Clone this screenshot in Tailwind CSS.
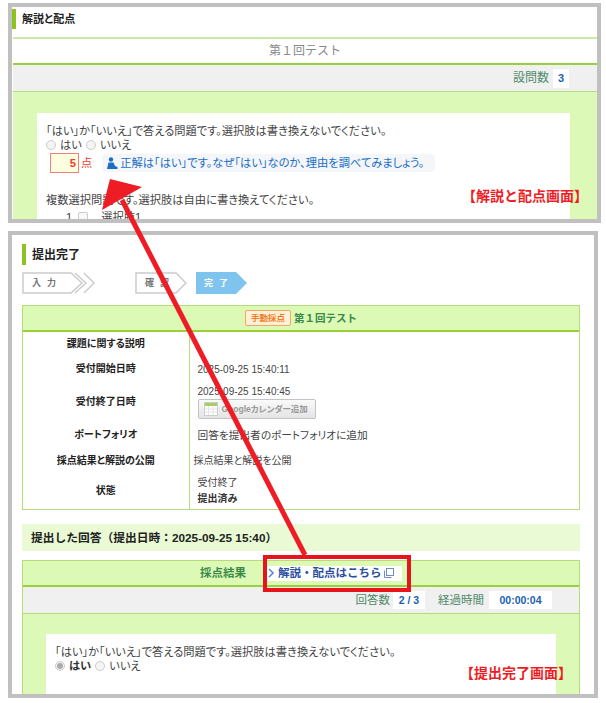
<!DOCTYPE html>
<html lang="ja">
<head>
  <meta charset="UTF-8" />
  <title>解説と配点 / 提出完了</title>
  <script src="https://cdn.jsdelivr.net/npm/@tailwindcss/browser@4"></script>
</head>
<body class="bg-white">
  <div class="relative w-[606px] h-[703px] overflow-hidden bg-white text-[#444] text-[11.25px] leading-[14px] whitespace-nowrap [font-feature-settings:'palt'] font-['Liberation_Sans','Noto_Sans_CJK_JP',sans-serif]">

    <!-- 解説と配点画面 -->
    <section class="ml-[8px] mt-[3px] w-[593px] h-[220px] border-4 border-[#c0c0c0] overflow-hidden bg-white">
      <div class="flex items-center h-[20px] mt-[2px] border-l-4 border-[#8cc31e] pl-[6px] text-[11px] font-bold text-[#222]">解説と配点</div>
      <div class="mt-[8px] ml-px border-t-2 border-[#cfe8a0] h-[28px] border-b-2 border-b-[#9ad03c] flex items-center justify-center text-[12px] text-[#888] [font-feature-settings:normal]">第１回テスト</div>
      <div class="ml-px h-[27px] bg-[#f0f0f0] border-b border-[#b5dc78] flex items-center justify-end pr-[28px]">
        <span class="text-[12px] text-[#4f8a6a]">設問数</span>
        <span class="ml-[4px] w-[16px] h-[19px] bg-white flex items-center justify-center text-[11px] font-bold text-[#1a5fb4]">3</span>
      </div>
      <div class="ml-px h-[140px] bg-[#ddf9b8] pl-[24px] pr-[27px] pt-[21px]">
        <div class="h-[120px] bg-white pl-[9px] pt-[11px]">
          <p>「はい」か「いいえ」で答える問題です。選択肢は書き換えないでください。</p>
          <div class="flex items-center h-[14px]">
            <span class="w-[10px] h-[10px] rounded-full border border-[#ccc] bg-[#f4f4f4]"></span>
            <span class="ml-[4px]">はい</span>
            <span class="ml-[4px] w-[10px] h-[10px] rounded-full border border-[#ccc] bg-[#f4f4f4]"></span>
            <span class="ml-[4px]">いいえ</span>
          </div>
          <div class="flex items-center mt-[1px] ml-[4px]">
            <span class="w-[29px] h-[20px] border border-[#f08078] bg-[#ffffe0] flex items-center justify-end pr-[2px] text-[#f03a2e] font-bold">5</span>
            <span class="ml-[2px] text-[#f03a2e]">点</span>
            <div class="ml-[10px] w-[333px] h-[18px] rounded-[4px] bg-[#f4f6fa] flex items-center pl-[4px] text-[#1a6fc4]">
              <svg width="12" height="13" viewBox="0 0 12 13" class="shrink-0"><circle cx="5" cy="2.500" r="2.200" fill="#1a6fc4"/><path d="M1 12l1.500-6.500h5L9 9l2.500 1v2z" fill="#1a6fc4"/></svg>
              <span class="ml-[2px]">正解は「はい」です。なぜ「はい」なのか、理由を調べてみましょう。</span>
            </div>
          </div>
          <p class="mt-[20px]">複数選択問題です。選択肢は自由に書き換えてください。</p>
          <div class="flex items-center mt-[3px] ml-[20px]">
            <span>1</span>
            <span class="ml-[6px] w-[10px] h-[10px] rounded-[2px] border border-[#ccc] bg-[#f8f8f8]"></span>
            <span class="ml-[13px]">選択肢1</span>
          </div>
        </div>
      </div>
    </section>

    <!-- 提出完了画面 -->
    <section class="ml-[8px] mt-[8px] w-[590px] h-[467px] border-4 border-[#c0c0c0] overflow-hidden bg-white pl-[10px] pr-[14px] pt-[9px]">
      <div class="flex items-center h-[21px] border-l-4 border-[#8cc31e] pl-[6px] text-[12px] font-bold text-[#222]">提出完了</div>

      <div class="flex mt-[7px] h-[22px] text-[9px] font-bold">
        <div class="relative w-[73px] h-[22px]">
          <svg width="73" height="22" class="absolute inset-0" fill="none" stroke="#ccc" stroke-width="1.500"><path d="M1 1h48l11 10-11 10H1z"/><path d="M53 1l11 10-11 10M62 1l10 10-10 10"/></svg>
          <span class="absolute left-[10px] top-[4px] text-[#777] tracking-[6px]">入力</span>
        </div>
        <div class="relative ml-[40px] w-[52px] h-[22px]">
          <svg width="52" height="22" class="absolute inset-0" fill="none" stroke="#ccc" stroke-width="1.500"><path d="M1 1h40l10 10-10 10H1z"/></svg>
          <span class="absolute left-[10px] top-[4px] text-[#777] tracking-[6px]">確認</span>
        </div>
        <div class="relative ml-[9px] w-[51px] h-[22px]">
          <svg width="51" height="22" class="absolute inset-0"><path d="M0 0h40l11 11-11 11H0z" fill="#7fc4ef"/></svg>
          <span class="absolute left-[8px] top-[4px] text-white tracking-[6px]">完了</span>
        </div>
      </div>

      <div class="mt-[11px] border border-[#b5dc78] text-[10px]">
        <div class="h-[26px] bg-[#dcf9b6] border-b-2 border-[#9ad03c] flex items-center justify-center">
          <span class="w-[46px] h-[16px] border border-[#f4a860] rounded-[2px] bg-[#fff1d8] flex items-center justify-center text-[8.5px] font-bold text-[#f07a1e]">手動採点</span>
          <span class="ml-[3px] text-[10.5px] font-bold text-[#3b8a4a] [font-feature-settings:normal]">第１回テスト</span>
        </div>
        <table class="w-full">
          <tbody>
            <tr class="h-[24px]">
              <th class="w-[166px] border-r border-[#b5dc78] text-[#222]">課題に関する説明</th>
              <td></td>
            </tr>
            <tr class="h-[26px]">
              <th class="border-r border-[#b5dc78] text-[#222]">受付開始日時</th>
              <td class="pl-[8px] pt-[2px]">2025-09-25 15:40:11</td>
            </tr>
            <tr class="h-[40px]">
              <th class="border-r border-[#b5dc78] text-[#222]">受付終了日時</th>
              <td class="pl-[8px]">
                <div>2025-09-25 15:40:45</div>
                <div class="flex items-center w-[118px] h-[20px] border border-[#c4c4c4] rounded-[2px] bg-gradient-to-b from-[#fafafa] to-[#e4e4e4] pl-[5px] text-[8.5px] font-bold text-[#999]">
                  <svg width="14" height="14" viewBox="0 0 14 14" class="shrink-0"><rect x=".5" y=".5" width="13" height="13" fill="#fff" stroke="#ccc"/><rect x="1" y="1" width="12" height="3" fill="#a6cf5e"/><path d="M1 7h12M1 10h12M4.500 4v9M9 4v9" stroke="#e4e4e4"/></svg>
                  <span class="ml-[4px]">Googleカレンダー追加</span>
                </div>
              </td>
            </tr>
            <tr class="h-[26px]">
              <th class="border-r border-[#b5dc78] text-[#222]">ポートフォリオ</th>
              <td class="pl-[8px] text-[10.7px]">回答を提出者のポートフォリオに追加</td>
            </tr>
            <tr class="h-[25px]">
              <th class="border-r border-[#b5dc78] text-[#222]">採点結果と解説の公開</th>
              <td class="pl-[4px]">採点結果と解説を公開</td>
            </tr>
            <tr class="h-[36px]">
              <th class="border-r border-[#b5dc78] text-[#222]">状態</th>
              <td class="pl-[8px] leading-[16px]">受付終了<br /><b class="text-[#333]">提出済み</b></td>
            </tr>
          </tbody>
        </table>
      </div>

      <div class="mt-[14px] h-[27px] bg-[#e9fad4] flex items-center pl-[9px] text-[11.75px] font-bold text-[#222] [font-feature-settings:normal]">提出した回答（提出日時：2025-09-25 15:40）</div>

      <div class="mt-[9px] border-x border-t border-[#b5dc78]">
        <div class="h-[26px] bg-[#dcf9b6] border-b-2 border-[#9ad03c] flex items-center justify-center">
          <span class="text-[11.5px] font-bold text-[#3b8a4a]">採点結果</span>
          <a class="ml-[20px] w-[136px] h-[15px] bg-white flex items-center pl-[1px] text-[11.5px] font-bold text-[#2a4fa0] [font-feature-settings:normal]">
            <svg width="8" height="10" viewBox="0 0 8 10" fill="none" stroke="#4a86d8" stroke-width="1.500" class="shrink-0"><path d="M2 1l4 4-4 4"/></svg>
            <span class="ml-[3px]">解説・配点はこちら</span>
            <svg width="10" height="10" viewBox="0 0 10 10" class="ml-[2px] shrink-0" fill="none" stroke="#6f8fc0"><rect x="2.500" y=".5" width="7" height="7"/><path d="M.5 2.500v7h7"/></svg>
          </a>
        </div>
        <div class="h-[27px] bg-[#f0f0f0] border-b border-[#b5dc78] flex items-center justify-end pr-[27px]">
          <span class="text-[11.5px] text-[#4f8a6a]">回答数</span>
          <span class="ml-[3px] w-[32px] h-[18px] bg-white flex items-center justify-center text-[10.5px] font-bold text-[#1a5fb4]">2 / 3</span>
          <span class="ml-[13px] text-[11.5px] text-[#4f8a6a]">経過時間</span>
          <span class="ml-[5px] w-[63px] h-[18px] bg-white flex items-center justify-center text-[10.5px] font-bold text-[#1a5fb4]">00:00:04</span>
        </div>
        <div class="h-[80px] bg-[#ddf9b8] px-[23px] pt-[20px]">
          <div class="h-[60px] bg-white pl-[9px] pt-[11px]">
            <p>「はい」か「いいえ」で答える問題です。選択肢は書き換えないでください。</p>
            <div class="flex items-center h-[14px]">
              <span class="w-[10px] h-[10px] rounded-full border border-[#ccc] bg-[#f4f4f4] flex items-center justify-center"><span class="w-[6px] h-[6px] rounded-full bg-[#aaa]"></span></span>
              <b class="ml-[4px] text-[#333]">はい</b>
              <span class="ml-[4px] w-[10px] h-[10px] rounded-full border border-[#ccc] bg-[#f4f4f4]"></span>
              <span class="ml-[4px]">いいえ</span>
            </div>
          </div>
        </div>
      </div>
    </section>

    <!-- 注釈 -->
    <span class="absolute left-[462px] top-[188px] text-[14px] leading-[16px] font-bold text-[#ee1c25] [font-feature-settings:normal]">【解説と配点画面】</span>
    <span class="absolute left-[460px] top-[665px] text-[14px] leading-[16px] font-bold text-[#ee1c25] [font-feature-settings:normal]">【提出完了画面】</span>
    <svg class="absolute inset-0" width="606" height="703" fill="none">
      <rect x="265" y="557" width="144" height="33" stroke="#e8141c" stroke-width="4"/>
      <path d="M305 555L122 200" stroke="#ee1c25" stroke-width="5"/>
      <path d="M110 179L142 187L102 210z" fill="#ee1c25"/>
    </svg>
  </div>
</body>
</html>
